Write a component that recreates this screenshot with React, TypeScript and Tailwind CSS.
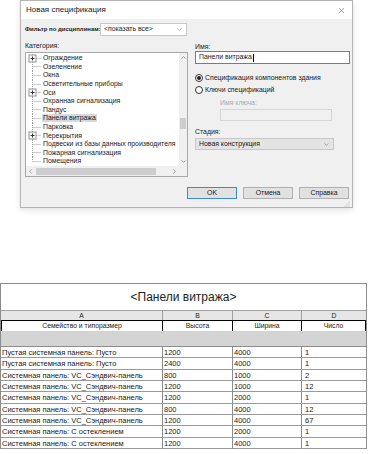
import { ChevronDown, ChevronUp, ChevronLeft, ChevronRight, X } from "lucide-react";

const treeItems = [
  { name: "Ограждение", plus: true },
  { name: "Озеленение" },
  { name: "Окна" },
  { name: "Осветительные приборы" },
  { name: "Оси", plus: true },
  { name: "Охранная сигнализация" },
  { name: "Пандус" },
  { name: "Панели витража", selected: true },
  { name: "Парковка" },
  { name: "Перекрытия", plus: true },
  { name: "Подвески из базы данных производителя" },
  { name: "Пожарная сигнализация" },
  { name: "Помещения" },
];

const rows = [
  ["Пустая системная панель: Пусто", "1200", "4000", "1"],
  ["Пустая системная панель: Пусто", "2400", "4000", "1"],
  ["Системная панель: VC_Сэндвич-панель", "800", "1000", "2"],
  ["Системная панель: VC_Сэндвич-панель", "1200", "1000", "12"],
  ["Системная панель: VC_Сэндвич-панель", "1200", "2000", "1"],
  ["Системная панель: VC_Сэндвич-панель", "800", "4000", "12"],
  ["Системная панель: VC_Сэндвич-панель", "1200", "4000", "67"],
  ["Системная панель: С остеклением", "1200", "2000", "1"],
  ["Системная панель: С остеклением", "1200", "4000", "1"],
];

const TreeMark = ({ plus, last }: { plus?: boolean; last?: boolean }) => (
  <svg width="15" height="9" viewBox="0 0 15 9" className="shrink-0">
    <line x1="5.5" y1="0" x2="5.5" y2={last ? 4.5 : 9} stroke="#a0a0a0" strokeDasharray="1 1" />
    <line x1="5.5" y1="4.5" x2="14" y2="4.5" stroke="#a0a0a0" strokeDasharray="1 1" />
    {plus && (
      <>
        <rect x="2" y="1" width="7" height="7" fill="#fff" stroke="#909090" />
        <line x1="3.5" y1="4.5" x2="7.5" y2="4.5" stroke="#333" />
        <line x1="5.5" y1="2.5" x2="5.5" y2="6.5" stroke="#333" />
      </>
    )}
  </svg>
);

const Radio = ({ checked }: { checked?: boolean }) => (
  <span className="w-[8px] h-[8px] rounded-full border border-[#333] bg-white flex items-center justify-center shrink-0">
    {checked && <span className="w-[4px] h-[4px] rounded-full bg-[#222]" />}
  </span>
);

export default function App() {
  return (
    <div className="w-[371px] h-[454px] bg-white overflow-hidden antialiased font-['Liberation_Sans',Arial,sans-serif] text-[#1a1a1a]">
      {/* dialog */}
      <div className="ml-[20px] w-[333px] h-[208px] border border-[#b4b4b4] bg-[#f0f0f0] flex flex-col shadow-[0_2px_6px_rgba(0,0,0,0.12)]">
        <div className="h-[18px] bg-white flex items-center justify-between pl-[5px] pr-[6px]">
          <span className="text-[8px]">Новая спецификация</span>
          <X size={9} strokeWidth={1.2} className="text-[#333]" />
        </div>

        <div className="flex-1 flex flex-col pl-[4px] pr-[2px] text-[6.9px]">
          <div className="mt-[4px] flex items-center h-[13px]">
            <span className="w-[75px] shrink-0 font-bold text-[6px] whitespace-nowrap">Фильтр по дисциплинам:</span>
            <div className="w-[87px] h-[13px] bg-white border border-[#c8c8c8] flex items-center justify-between pl-[3px] pr-[3px]">
              <span>&lt;показать все&gt;</span>
              <ChevronDown size={7} className="text-[#777]" />
            </div>
          </div>

          <div className="flex mt-[6px]">
            {/* left column */}
            <div className="w-[163px] flex flex-col">
              <span className="h-[10px] leading-[8px]">Категория:</span>
              <div className="h-[125px] border border-[#a8a8a8] bg-white flex flex-col">
                <div className="flex flex-1">
                  <div className="flex-1 pt-[1px] pl-[1px] flex flex-col overflow-hidden">
                    {treeItems.map((it, i) => (
                      <div key={it.name} className="h-[8.6px] flex items-center">
                        <TreeMark plus={it.plus} last={i === treeItems.length - 1} />
                        <span
                          className={`whitespace-nowrap leading-[8px] px-[1px] ${
                            it.selected ? "bg-[#d9d9d9]" : ""
                          }`}
                        >
                          {it.name}
                        </span>
                      </div>
                    ))}
                  </div>
                  <div className="w-[8px] bg-[#f0f0f0] flex flex-col items-center justify-between py-[1px]">
                    <ChevronUp size={7} className="text-[#606060]" />
                    <div className="flex-1 w-full flex flex-col pt-[57px]">
                      <div className="h-[11px] w-[6px] mx-auto bg-[#cdcdcd]" />
                    </div>
                    <ChevronDown size={7} className="text-[#606060]" />
                  </div>
                </div>
                <div className="h-[10px] flex">
                  <div className="flex-1 bg-[#f0f0f0] flex items-center">
                    <ChevronLeft size={7} className="text-[#606060] ml-[1px]" />
                    <div className="ml-[2px] w-[120px] h-[7px] bg-[#cdcdcd]" />
                    <ChevronRight size={7} className="text-[#606060] ml-auto mr-[1px]" />
                  </div>
                  <div className="w-[8px] bg-[#f0f0f0]" />
                </div>
              </div>
            </div>

            {/* right column */}
            <div className="ml-[7px] w-[155px] flex flex-col">
              <span className="h-[8px] leading-[8px] mt-[1px]">Имя:</span>
              <div className="h-[13px] border border-[#3c8ad6] bg-white flex items-center pl-[3px]">
                <span>Панели витража</span>
                <span className="w-px h-[8px] bg-black ml-[1px]" />
              </div>
              <div className="mt-[10px] flex items-center gap-[2px] h-[8px]">
                <Radio checked />
                <span>Спецификация компонентов здания</span>
              </div>
              <div className="mt-[4px] flex items-center gap-[2px] h-[8px]">
                <Radio />
                <span>Ключи спецификаций</span>
              </div>
              <span className="mt-[5px] ml-[25px] text-[#a8a8a8] h-[8px] leading-[8px]">Имя ключа:</span>
              <div className="ml-[25px] w-[112px] h-[12px] mt-[2px] border border-[#d6d6d6] bg-[#f0f0f0]" />
              <span className="mt-[7px] h-[8px] leading-[8px]">Стадия:</span>
              <div className="mt-[2px] w-[139px] h-[12px] bg-[#e4e4e4] border border-[#c8c8c8] flex items-center justify-between pl-[3px] pr-[3px]">
                <span>Новая конструкция</span>
                <ChevronDown size={7} className="text-[#777]" />
              </div>
            </div>
          </div>

          <div className="mt-[10px] flex justify-end gap-[6px] pr-[1px]">
            <button className="w-[50px] h-[12px] border border-[#3c8ad6] bg-[#e1e1e1] text-[6.9px] flex items-center justify-center">
              OK
            </button>
            <button className="w-[50px] h-[12px] border border-[#b0b0b0] bg-[#e1e1e1] text-[6.9px] flex items-center justify-center">
              Отмена
            </button>
            <button className="w-[50px] h-[12px] border border-[#b0b0b0] bg-[#e1e1e1] text-[6.9px] flex items-center justify-center">
              Справка
            </button>
          </div>
          <div className="flex justify-end mt-auto">
            <svg width="6" height="6" viewBox="0 0 6 6">
              <circle cx="5" cy="1" r="0.5" fill="#aaa" />
              <circle cx="3" cy="3" r="0.5" fill="#aaa" />
              <circle cx="5" cy="3" r="0.5" fill="#aaa" />
              <circle cx="1" cy="5" r="0.5" fill="#aaa" />
              <circle cx="3" cy="5" r="0.5" fill="#aaa" />
              <circle cx="5" cy="5" r="0.5" fill="#aaa" />
            </svg>
          </div>
        </div>
      </div>

      {/* schedule */}
      <div className="mt-[75px] w-[367px] border-l border-r border-t border-[#8c8c8c] flex flex-col">
        <div className="h-[26px] flex items-center justify-center text-[12px] text-[#222]">
          &lt;Панели витража&gt;
        </div>
        <div className="grid grid-cols-[162px_70px_69px_1fr] h-[10px] bg-[#e6e6e6] border-t border-[#a0a0a0] text-[6.8px]">
          <div className="flex items-center justify-center border-r border-[#a0a0a0]">A</div>
          <div className="flex items-center justify-center border-r border-[#a0a0a0]">B</div>
          <div className="flex items-center justify-center border-r border-[#a0a0a0]">C</div>
          <div className="flex items-center justify-center">D</div>
        </div>
        <div className="grid grid-cols-[162px_70px_69px_1fr] h-[11px] text-[6.8px] bg-white">
          <div className="flex items-center justify-center border-[1.5px] border-black">Семейство и типоразмер</div>
          <div className="flex items-center justify-center border-[1.5px] border-l-0 border-black">Высота</div>
          <div className="flex items-center justify-center border-[1.5px] border-l-0 border-black">Ширина</div>
          <div className="flex items-center justify-center border-[1.5px] border-l-0 border-black">Число</div>
        </div>
        <div className="h-[16px] bg-[#d4d4d4] border-b border-[#8c8c8c]" />
        {rows.map((r, i) => (
          <div
            key={i}
            className={`grid grid-cols-[162px_70px_69px_1fr] text-[7.5px] border-b border-[#9a9a9a] ${
              i % 3 === 1 ? "h-[12px]" : "h-[11px]"
            }`}
          >
            <div className="flex items-center pl-[1px] border-r border-[#8c8c8c] whitespace-nowrap">{r[0]}</div>
            <div className="flex items-center pl-[1px] border-r border-[#8c8c8c]">{r[1]}</div>
            <div className="flex items-center pl-[1px] border-r border-[#8c8c8c]">{r[2]}</div>
            <div className="flex items-center pl-[3px]">{r[3]}</div>
          </div>
        ))}
      </div>
    </div>
  );
}
